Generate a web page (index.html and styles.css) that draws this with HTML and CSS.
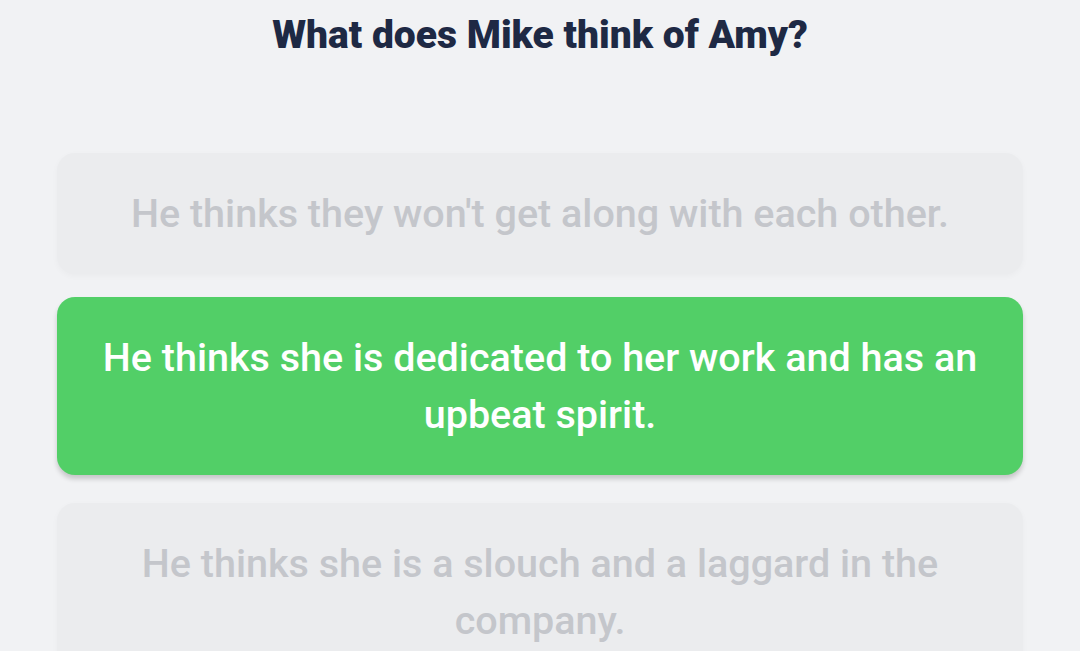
FILE: index.html
```html
<!DOCTYPE html>
<html>
<head>
<meta charset="utf-8">
<link rel="stylesheet" href="styles.css">
</head>
<body>
<main class="quiz">
  <h1 class="question">What does Mike think of Amy?</h1>
  <div class="options">
    <div class="option faded">He thinks they won't get along with each other.</div>
    <div class="option correct">He thinks she is dedicated to her work and has an upbeat spirit.</div>
    <div class="option faded">He thinks she is a slouch and a laggard in the company.</div>
  </div>
</main>
</body>
</html>
```
FILE: styles.css
```css
html, body {
  margin: 0;
  padding: 0;
  background: #f1f2f4;
  font-family: Roboto, "Noto Sans", sans-serif;
  overflow: hidden;
}
.quiz {
  padding: 0 57px;
}
.question {
  margin: 0;
  padding-top: 9px;
  height: 153px;
  box-sizing: border-box;
  text-align: center;
  font-weight: 900;
  font-size: 39px;
  line-height: 52px;
  color: #1e2944;
}
.options {
  display: flex;
  flex-direction: column;
  gap: 23px;
}
.option {
  border-radius: 18px;
  padding: 32px 40px;
  text-align: center;
  font-size: 39.5px;
  line-height: 57px;
  font-weight: 500;
}
.faded {
  background: #ebecee;
  color: #c4c6cb;
  box-shadow: 0 2px 6px rgba(0,0,0,0.03);
}
.correct {
  background: #52cf67;
  color: #ffffff;
  margin-bottom: 5px;
  box-shadow: 0 4px 5px rgba(0,0,0,0.18);
}
```
